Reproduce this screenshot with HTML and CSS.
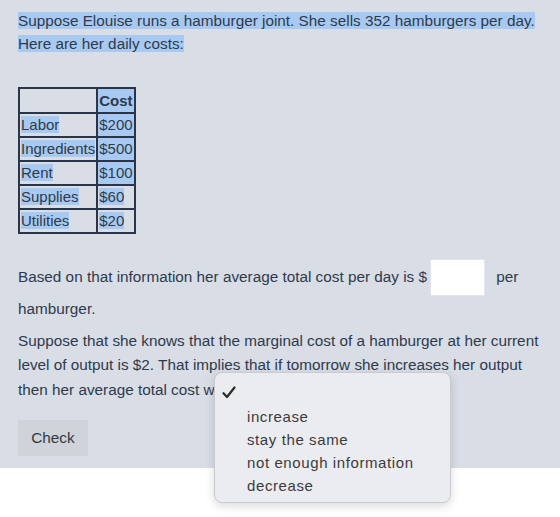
FILE: index.html
```html
<!DOCTYPE html>
<html>
<head>
<meta charset="utf-8">
<link rel="stylesheet" href="styles.css">
</head>
<body>
<div class="question">
  <p class="intro"><span class="sel">Suppose Elouise runs a hamburger joint. She sells 352 hamburgers per day.</span><br><span class="sel">Here are her daily costs:</span></p>

  <table class="costs">
    <tr><th></th><th class="sel-cell">Cost</th></tr>
    <tr><td><span class="sel">Labor</span></td><td class="sel-cell">$200</td></tr>
    <tr><td><span class="sel">Ingredients</span></td><td class="sel-cell">$500</td></tr>
    <tr><td><span class="sel">Rent</span></td><td class="sel-cell">$100</td></tr>
    <tr><td><span class="sel">Supplies</span></td><td><span class="sel">$60</span></td></tr>
    <tr><td><span class="sel">Utilities</span></td><td><span class="sel">$20</span></td></tr>
  </table>

  <p class="answer">Based on that information her average total cost per day is $<input class="blank" type="text"> per hamburger.</p>

  <p class="marginal">Suppose that she knows that the marginal cost of a hamburger at her current level of output is $2. That implies that if tomorrow she increases her output then her average total cost will <span class="choice"></span></p>

  <button class="check">Check</button>
</div>
<div class="page-foot"></div>

<div class="menu">
  <div class="menu-row checked">
    <svg class="tick" width="14" height="13" viewBox="0 0 14 13"><path d="M1.5 7.2 L5 11 L12.5 1.5" fill="none" stroke="#2b2b2b" stroke-width="2.2" stroke-linecap="round" stroke-linejoin="round"/></svg>
  </div>
  <div class="menu-row">increase</div>
  <div class="menu-row">stay the same</div>
  <div class="menu-row">not enough information</div>
  <div class="menu-row">decrease</div>
</div>
</body>
</html>
```

FILE: styles.css
```css
html, body {
  margin: 0;
  background: #ffffff;
}

body {
  font-family: "Liberation Sans", Arial, sans-serif;
  font-size: 15.3px;
  color: #2e3a4c;
  position: relative;
  min-height: 517px;
}

.question {
  background: #d9dde6;
  padding: 9px 18px 0 18px;
  height: 459px;
}

.page-foot {
  height: 49px;
  background: #ffffff;
}

.intro {
  margin: 0;
  line-height: 23px;
}

.sel {
  background: #a8caf2;
}

.costs {
  margin-top: 32px;
  border-collapse: collapse;
  border: 2px solid #2a3648;
  font-size: 15px;
}

.costs th,
.costs td {
  border: 2px solid #2a3648;
  padding: 0 1px;
  height: 22px;
  line-height: 22px;
  text-align: left;
}

.costs th {
  font-weight: bold;
  height: 23px;
}

.sel-cell {
  background: #a8caf2;
}

.answer {
  margin: 25px 0 0 0;
  line-height: 25px;
}

.blank {
  box-sizing: border-box;
  width: 55px;
  height: 37px;
  border: 1px solid #e2e5ec;
  background: #ffffff;
  vertical-align: middle;
  margin: 0 7px 0 3px;
  padding: 0;
}

.marginal {
  margin: 8px 0 0 0;
  line-height: 24px;
}

.choice {
  display: inline-block;
  width: 60px;
  height: 28px;
  vertical-align: middle;
}

.check {
  margin-top: 15px;
  width: 70px;
  height: 36px;
  border: none;
  background: #cfd3da;
  color: #333840;
  font-family: "Liberation Sans", Arial, sans-serif;
  font-size: 15.3px;
  padding: 0;
}

.menu {
  position: absolute;
  left: 214px;
  top: 372px;
  width: 237px;
  box-sizing: border-box;
  height: 131px;
  padding: 7px 0 0 0;
  background: #ebecef;
  border: 1px solid #c9cbd0;
  border-radius: 8px;
  box-shadow: 0 3px 10px rgba(0, 0, 0, 0.15);
  font-family: "Liberation Sans", Arial, sans-serif;
  font-size: 15px;
  letter-spacing: 0.6px;
  color: #3b3b3d;
}

.menu-row {
  height: 23px;
  line-height: 23px;
  padding-left: 32px;
}

.menu-row.checked {
  height: 24px;
  padding-left: 7px;
  margin-bottom: 1px;
  display: flex;
  align-items: center;
}
```
